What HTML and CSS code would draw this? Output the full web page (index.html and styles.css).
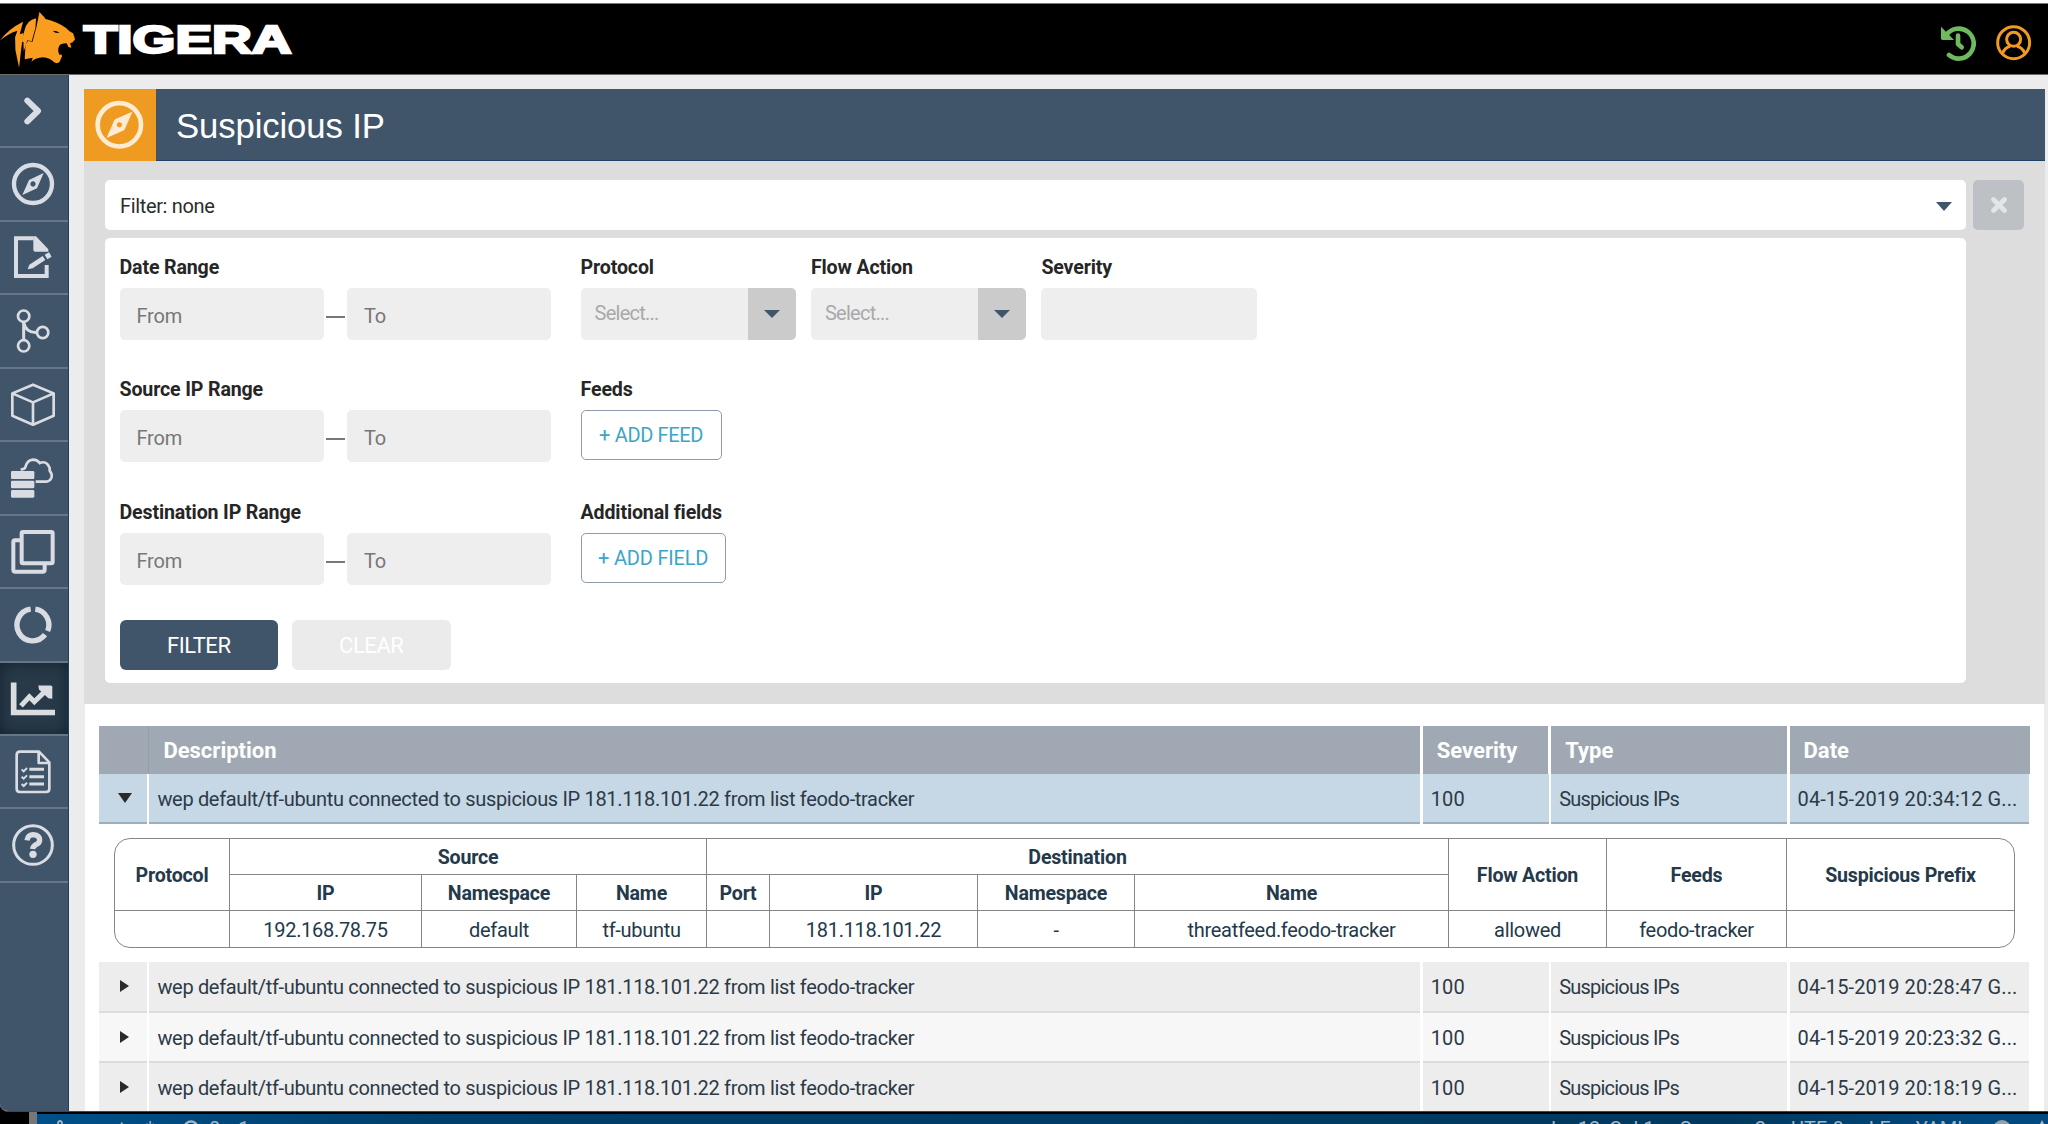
FILE: index.html
```
<!DOCTYPE html>
<html lang="en">
<head>
<meta charset="utf-8">
<title>Suspicious IP</title>
<link rel="stylesheet" href="styles.css">
</head>
<body>
<div class="window">
  <header class="topbar">
    <svg class="logo" viewBox="0 30 900 178" width="300" height="59.3">
      <g fill="#fa9d1f">
        <path d="M0 121Q26 86 69 65L59 103L70 99L63 150L57 203L46 150L45 112L52 92Q25 100 0 121Z"/>
        <path d="M73 92Q80 60 108 55L106 84L95 124L82 121L71 154L70 126L64 124Z"/>
        <path d="M118 36L133 52L136 57Q170 64 198 84Q206 94 219 100L225 118L218 127L210 130L214 143L205 141L200 130Q180 130 177 139Q171 154 179 165L184 163L186 169L178 187Q170 192 162 187Q150 174 128 172Q108 173 94 185L98 173L74 178L76 135L84 122L97 126L109 82Z"/>
      </g>
      <path d="M158 92L170 94L179 99L166 98Z"/>
      <text class="wordmark" x="251" y="158" textLength="624" lengthAdjust="spacingAndGlyphs">TIGERA</text>
    </svg>
    <div class="top-actions">
      <svg viewBox="268 72 110 112" width="36.7" height="37.3">
        <path d="M288 104A45 45 0 1 1 295 165" fill="none" stroke="#6dbb5c" stroke-width="14" stroke-linecap="round"/>
        <path d="M271 80L310 120H276Q271 120 271 115Z" fill="#6dbb5c"/>
        <path d="M322 107V132L333 142" fill="none" stroke="#6dbb5c" stroke-width="14" stroke-linecap="round" stroke-linejoin="round"/>
      </svg>
      <svg viewBox="435 72 112 112" width="37.3" height="37.3" fill="none" stroke="#f09a22" stroke-width="9">
        <circle cx="491" cy="128" r="48"/><circle cx="491" cy="118" r="21"/><path d="M457 161Q465 142 481 139M525 161Q517 142 501 139"/>
      </svg>
    </div>
  </header>
  <div class="body">
    <nav class="sidebar">
      <a class="item"><svg viewBox="0 225 207 214"><path d="M82 302L114 333L82 364" stroke-width="18" stroke-linecap="round" stroke-linejoin="round"/></svg></a>
      <a class="item"><svg viewBox="0 445 207 214"><circle cx="99" cy="553" r="57" stroke-width="13"/><path class="solid" fill-rule="evenodd" d="M131 520L111 566L67 586L87 541ZM99 545a8 8 0 1 0 .1 0Z" stroke-width="2" stroke-linejoin="round"/></svg></a>
      <a class="item"><svg viewBox="0 5 207 214"><path d="M101 54H48V167H140V134" stroke-width="12"/><path class="solid" d="M100 48H108L145 87V94H106Q100 94 100 88ZM83 147L88 133L128 107L136 119L98 144ZM134 103L147 96L155 109L142 117Z"/></svg></a>
      <a class="item"><svg viewBox="0 225.6 207 214"><g stroke-width="8"><circle cx="71" cy="289" r="17"/><circle cx="71" cy="378" r="17"/><circle cx="128" cy="338" r="17"/><path d="M71 306V361M71 308Q78 340 111 338" stroke-width="9"/></g></svg></a>
      <a class="item"><svg viewBox="0 446 207 214"><path d="M99 493L161 519V586L99 613L37 586V519ZM37 519L99 546L161 519M99 546V613" stroke-width="8" stroke-linejoin="round"/></svg></a>
      <a class="item"><svg viewBox="0 666 207 214"><g class="solid"><rect x="33" y="753" width="70" height="24" rx="4"/><rect x="33" y="782" width="70" height="23" rx="4"/><rect x="33" y="810" width="70" height="23" rx="4"/></g><path d="M62 748Q75 748 76 741Q82 720 99 719Q112 719 119 729Q132 723 142 732Q151 742 149 752Q158 763 154 774Q149 785 136 785H107" stroke-width="8"/></svg></a>
      <a class="item"><svg viewBox="0 886 207 214"><g stroke-width="12" stroke-linejoin="round"><rect x="65" y="934" width="93" height="94" rx="4"/><path d="M63 959H45Q40 959 40 964V1047Q40 1053 46 1053H128Q134 1053 134 1047V1032"/></g></svg></a>
      <a class="item"><svg viewBox="0 26 207 214"><path d="M106 86A47 48 0 0 1 143 152M135 163A47 48 0 1 1 92 86" stroke-width="16"/></svg></a>
      <a class="item active"><svg viewBox="0 246.6 207 214"><path d="M41 305V395H165" stroke-width="17"/><path d="M63 375L88 348L103 363L139 328" stroke-width="15"/><path class="solid" d="M115 314H152Q157 314 157 319V354L145 352L117 326Z"/></svg></a>
      <a class="item"><svg viewBox="0 467 207 214"><g stroke-width="8" stroke-linejoin="round"><path d="M117 514H60Q50 514 50 524V625Q50 635 60 635H138Q148 635 148 625V546Z"/><path d="M116 516V548H147"/></g><path d="M88 567H132M88 589H132M88 611H132" stroke-width="9"/><path d="M65 567L71 573L81 563M65 589L71 595L81 585M65 611L71 617L81 607" stroke-width="6"/></svg></a>
      <a class="item"><svg viewBox="0 687 207 214"><circle cx="99" cy="795" r="58" stroke-width="9"/><path d="M81 781Q84 764 100 764Q119 766 119 780Q119 789 108 794Q99 799 98 807" stroke-width="16"/><circle class="solid" cx="99" cy="823" r="11"/></svg></a>
    </nav>
    <main class="content">
      <div class="titlebar">
        <div class="title-icon"><svg viewBox="252 269 216 215" width="72" height="72"><circle cx="358" cy="376" r="65" fill="none" stroke="#fdebd2" stroke-width="14"/><path fill="#fdebd2" fill-rule="evenodd" d="M395 339L372 391L322 413L345 361ZM358 367a9 9 0 1 0 .1 0Z" stroke="#fdebd2" stroke-width="3" stroke-linejoin="round"/></svg></div>
        <h1>Suspicious IP</h1>
      </div>
      <section class="filters">
        <div class="filter-col">
          <div class="filter-summary"><span>Filter: none</span><i class="caret"></i></div>
          <div class="filter-panel">
            <div class="field-row">
              <div class="field range"><label>Date Range</label><div class="pair"><span class="input">From</span><i class="dash"></i><span class="input">To</span></div></div>
              <div class="field"><label>Protocol</label><div class="select"><span>Select...</span><b><i class="caret small"></i></b></div></div>
              <div class="field"><label>Flow Action</label><div class="select"><span>Select...</span><b><i class="caret small"></i></b></div></div>
              <div class="field"><label>Severity</label><span class="input severity"></span></div>
            </div>
            <div class="field-row">
              <div class="field range"><label>Source IP Range</label><div class="pair"><span class="input">From</span><i class="dash"></i><span class="input">To</span></div></div>
              <div class="field"><label>Feeds</label><button class="outline">+ ADD FEED</button></div>
            </div>
            <div class="field-row last">
              <div class="field range"><label>Destination IP Range</label><div class="pair"><span class="input">From</span><i class="dash"></i><span class="input">To</span></div></div>
              <div class="field"><label>Additional fields</label><button class="outline wide">+ ADD FIELD</button></div>
            </div>
            <div class="buttons"><button class="primary">FILTER</button><button class="disabled">CLEAR</button></div>
          </div>
        </div>
        <button class="close"><svg viewBox="0 0 16 16" width="16" height="16"><path d="M2.5 2.5L13.5 13.5M13.5 2.5L2.5 13.5" stroke="#e4e5e7" stroke-width="4.6" stroke-linecap="round"/></svg></button>
      </section>
      <section class="events">
        <div class="row head"><div></div><div>Description</div><div>Severity</div><div>Type</div><div>Date</div></div>
        <div class="row selected"><div><i class="tri down"></i></div><div class="desc">wep default/tf-ubuntu connected to suspicious IP 181.118.101.22 from list feodo-tracker</div><div>100</div><div class="type">Suspicious IPs</div><div>04-15-2019 20:34:12 G...</div></div>
        <div class="detail">
          <table>
            <colgroup><col class="c1"><col class="c2"><col class="c3"><col class="c4"><col class="c5"><col class="c6"><col class="c7"><col class="c8"><col class="c9"><col class="c10"><col></colgroup>
            <tr><th rowspan="2">Protocol</th><th colspan="3">Source</th><th colspan="4">Destination</th><th rowspan="2">Flow Action</th><th rowspan="2">Feeds</th><th rowspan="2">Suspicious Prefix</th></tr>
            <tr><th>IP</th><th>Namespace</th><th>Name</th><th>Port</th><th>IP</th><th>Namespace</th><th>Name</th></tr>
            <tr><td></td><td>192.168.78.75</td><td>default</td><td>tf-ubuntu</td><td></td><td>181.118.101.22</td><td>-</td><td>threatfeed.feodo-tracker</td><td>allowed</td><td>feodo-tracker</td><td></td></tr>
          </table>
        </div>
        <div class="row"><div><i class="tri"></i></div><div class="desc">wep default/tf-ubuntu connected to suspicious IP 181.118.101.22 from list feodo-tracker</div><div>100</div><div class="type">Suspicious IPs</div><div>04-15-2019 20:28:47 G...</div></div>
        <div class="row alt"><div><i class="tri"></i></div><div class="desc">wep default/tf-ubuntu connected to suspicious IP 181.118.101.22 from list feodo-tracker</div><div>100</div><div class="type">Suspicious IPs</div><div>04-15-2019 20:23:32 G...</div></div>
        <div class="row"><div><i class="tri"></i></div><div class="desc">wep default/tf-ubuntu connected to suspicious IP 181.118.101.22 from list feodo-tracker</div><div>100</div><div class="type">Suspicious IPs</div><div>04-15-2019 20:18:19 G...</div></div>
      </section>
    </main>
  </div>
</div>
<footer class="statusbar">
  <div class="corner"></div>
  <div class="status">
    <div class="status-left"><svg viewBox="0 0 10 16" width="10" height="16" fill="none" stroke="#a5b4c2" stroke-width="1.8"><circle cx="3" cy="3" r="2"/><circle cx="3" cy="13" r="2"/><path d="M3 5v6"/></svg><span>master*</span><svg viewBox="0 0 16 16" width="16" height="16" fill="none" stroke="#a5b4c2" stroke-width="2.4"><circle cx="8" cy="8" r="6.5"/></svg><span class="sync">0↓ 1↑</span></div>
    <div class="status-right"><span>Ln 12, Col 1</span><span>Spaces: 2</span><span>UTF-8</span><span>LF</span><span>YAML</span><svg viewBox="0 0 18 18" width="18" height="18"><circle cx="9" cy="9" r="9" fill="#9a9fa5"/></svg><svg viewBox="0 0 12 16" width="12" height="16"><path d="M6 0L12 12H0Z" fill="#a9b5c0"/></svg></div>
  </div>
</footer>
</body>
</html>
```
FILE: styles.css
```
* { box-sizing: border-box; }
body { margin: 0; width: 2048px; height: 1124px; overflow: hidden; background: #000; font: 20px/24px Roboto, "Liberation Sans", sans-serif; letter-spacing: -0.32px; color: #2c2c2c; }
h1, button { margin: 0; padding: 0; border: 0; font: inherit; letter-spacing: inherit; }
.window { height: 1112px; overflow: hidden; background: #ececec; border-top: 3px solid #fff; border-bottom: 1px solid #444; border-radius: 0 0 0 8px; }

.topbar { height: 72px; background: #000; border-top: 1px solid #777; border-bottom: 1px solid #6b6b6b; display: flex; justify-content: space-between; }
.logo { margin-top: 6px; }
.wordmark { font: 700 114px "Liberation Sans", Arial, sans-serif; letter-spacing: 0; fill: #fff; stroke: #fff; stroke-width: 7px; }
.top-actions { display: flex; gap: 19px; padding: 20px 15.5px 0 0; }

.body { display: flex; height: 1037px; }
.sidebar { width: 69px; flex: none; background: #41556a; border-right: 1px solid #1d4066; }
.item { display: block; height: 73.45px; border-bottom: 2px solid #667686; }
.item svg { display: block; width: 69px; height: 71.4px; fill: none; stroke: #d9dde3; }
.item .solid { fill: #d9dde3; stroke: none; }
.item.active { background: #283a49; box-shadow: inset 0 0 16px #15222e; }
.item.active svg { stroke: #d9dddf; }

.content { flex: 1; padding: 14px 3px 0 15px; }
.titlebar { height: 72px; display: flex; background: #41556a; border-bottom: 1px solid #1d4066; }
.title-icon { width: 72px; height: 72px; background: #ef9b21; }
h1 { margin-left: 20px; font: 400 34.7px/75px "Liberation Sans", Arial, sans-serif; letter-spacing: -0.1px; color: #fff; }

.filters { height: 543px; background: #ddd; padding: 19px 21px 0; display: flex; gap: 7px; }
.filter-col { width: 1861px; }
.filter-summary { height: 50px; margin-bottom: 8px; padding: 2px 14px 0 15px; background: #fff; border-radius: 5px; display: flex; justify-content: space-between; align-items: center; letter-spacing: -0.35px; }
.caret { border: 8px solid transparent; border-top: 9px solid #41556a; border-bottom: 0; }
.caret.small { border-width: 8px 8px 0; }
.filter-panel { height: 445px; padding: 17px 14px 0 14.5px; background: #fff; border-radius: 5px; }
.field-row { display: flex; gap: 15px; height: 122.3px; }
.field-row.last { height: 120px; }
.field { display: flex; flex-direction: column; align-items: flex-start; }
.field.range { margin-right: 14.5px; }
label { height: 33px; padding-top: 1px; font-weight: 700; font-size: 19.6px; letter-spacing: -0.15px; color: #262626; }
.pair { display: flex; align-items: center; }
.input { width: 204px; height: 52px; padding: 3px 17px 0; line-height: 50px; border-radius: 5px; background: #eee; color: #777; letter-spacing: -0.2px; }
.dash { width: 19px; height: 2px; margin: 6px 2.3px 0; background: #777; }
.input.severity { width: 216px; }
.select { display: flex; width: 215.4px; height: 52px; border-radius: 5px; overflow: hidden; background: #eee; color: #a9a9a9; letter-spacing: -0.75px; }
.select span { flex: 1; padding-left: 14px; line-height: 50px; }
.select b { width: 48px; background: #cbcbcb; display: flex; align-items: center; justify-content: center; }
.outline { width: 141px; height: 50px; border: 1px solid #8f9baa; border-radius: 5px; background: #fff; color: #3ba5c7; letter-spacing: -0.35px; }
.outline.wide { width: 145px; letter-spacing: -0.2px; }
.buttons { display: flex; gap: 14px; }
.buttons button { width: 158.5px; height: 50px; border-radius: 6px; font-size: 22px; letter-spacing: -0.45px; padding-top: 2px; color: #fff; }
.primary { background: #41556a; }
.disabled { background: #ebebeb; }
.close { width: 51px; height: 50px; border-radius: 5px; background: #bdc1c6; }
.close svg { vertical-align: middle; margin-bottom: 3px; }

.events { height: 408px; margin: 0 1px; padding: 22px 14px 0; background: #fff; color: #2c3a47; }
.row { display: grid; grid-template-columns: 48px 1271px 126px 236px 239px; column-gap: 2.4px; height: 50.5px; }
.row > div { background: #ededed; border-bottom: 2px solid #dcdcdc; line-height: 51px; padding-left: 8px; white-space: nowrap; overflow: hidden; letter-spacing: 0.1px; }
.row > div:first-child { padding-left: 18px; display: flex; align-items: center; }
.row > div.desc { letter-spacing: -0.325px; }
.row > div.type { letter-spacing: -0.78px; }
.row.alt > div { background: #f7f7f7; }
.row.head { height: 48px; background: #a0a9b3; column-gap: 0; grid-template-columns: 50.4px 1273.4px 128.4px 238.4px 239px; }
.row.head > div { background: #a0a9b3; border: 0; border-right: 3px solid #fff; font-weight: 700; font-size: 22px; line-height: 50px; color: #fff; padding-left: 14px; letter-spacing: 0; }
.row.head > div:first-child { border-right: 1px solid #949ea8; }
.row.head > div:last-child { border-right: 0; }
.row.selected { height: 50px; }
.row.selected > div { background: #c6d7e5; border-bottom-color: #9bafc1; }
.tri { margin-left: 3px; border: 6.5px solid transparent; border-left: 9.5px solid #2a2a2a; border-right: 0; }
.tri.down { margin-left: 1px; border: 7px solid transparent; border-top: 10px solid #2a2a2a; border-bottom: 0; }

.detail { width: 1901px; height: 110px; margin: 14px 0 14px 15px; border: 1px solid #858585; border-radius: 16px; overflow: hidden; }
table { width: 1899px; height: 108px; table-layout: fixed; border-collapse: separate; border-spacing: 0; color: #24394a; }
th, td { height: 36px; padding: 1px 0 0; text-align: center; border: 0 solid #858585; border-left-width: 1px; border-bottom-width: 1px; line-height: 30px; }
th { padding-top: 2px; font-size: 19.6px; letter-spacing: -0.2px; }
td { letter-spacing: -0.3px; border-bottom-width: 0; }
tr:first-child > th:first-child, td:first-child { border-left-width: 0; }
.c1 { width: 114px; } .c2 { width: 192px; } .c3 { width: 155px; } .c4 { width: 130px; } .c5 { width: 63px; } .c6 { width: 208px; } .c7 { width: 157px; } .c8 { width: 314px; } .c9 { width: 158px; } .c10 { width: 180px; }

.statusbar { height: 12px; display: flex; overflow: hidden; }
.corner { width: 37px; height: 30px; background: #000; border-right: 8px solid #777; border-radius: 0 0 0 8px; }
.status { flex: 1; height: 34px; margin-top: 2px; padding-top: 6px; background: linear-gradient(90deg, #00508a, #003f6b 20%, #00395f 84%, #004a80 97%); display: flex; justify-content: space-between; color: #a5b4c2; font-size: 20px; line-height: 20px; }
.status-left { display: flex; gap: 10px; padding-left: 20px; }
.status-left span { width: 96px; margin-top: -1px; letter-spacing: 1px; }
.status-right { display: flex; gap: 25px; }
.status-right span { margin-top: -1px; letter-spacing: 0; }
```
